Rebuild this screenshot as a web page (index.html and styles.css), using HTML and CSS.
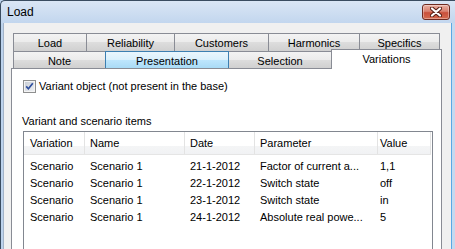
FILE: index.html
```html
<!DOCTYPE html>
<html>
<head>
<meta charset="utf-8">
<link rel="stylesheet" href="styles.css">
</head>
<body>
<div class="window">
  <div class="titlebar">
    <span class="title">Load</span>
    <div class="close">
      <svg width="12" height="10" viewBox="0 0 12 10">
        <path d="M2 1.5 L10 8.5 M10 1.5 L2 8.5" stroke="#5a2219" stroke-width="4.2" stroke-linecap="round"/>
        <path d="M2 1.5 L10 8.5 M10 1.5 L2 8.5" stroke="#ffffff" stroke-width="2.2" stroke-linecap="round"/>
      </svg>
    </div>
  </div>
  <div class="frame">
    <div class="client">
      <div class="tabctl">
        <div class="tabs">
          <div class="tabrow row1">
            <div class="tab w-load">Load</div>
            <div class="tab w-rel">Reliability</div>
            <div class="tab w-cust">Customers</div>
            <div class="tab w-harm">Harmonics</div>
            <div class="tab w-spec">Specifics</div>
          </div>
          <div class="tabrow row2">
            <div class="tab w-note">Note</div>
            <div class="tab hover w-pres">Presentation</div>
            <div class="tab w-sel">Selection</div>
            <div class="tab selected w-var">Variations</div>
          </div>
        </div>
        <div class="panel">
          <div class="check">
            <span class="box">
              <svg width="13" height="13" viewBox="0 0 13 13">
                <defs>
                  <linearGradient id="cbg" x1="0" y1="0" x2="1" y2="1">
                    <stop offset="0" stop-color="#c9ced6"/>
                    <stop offset="1" stop-color="#eef0f3"/>
                  </linearGradient>
                </defs>
                <rect x="0.5" y="0.5" width="12" height="12" fill="#f4f4f4" stroke="#8e8f8f"/>
                <rect x="2" y="2" width="9" height="9" fill="url(#cbg)"/>
                <path d="M3.2 6.4 L5.4 8.8 L9.8 3.3" fill="none" stroke="#2f4f9e" stroke-width="1.7"/>
              </svg>
            </span>
            <span class="check-text">Variant object (not present in the base)</span>
          </div>
          <div class="group-label">Variant and scenario items</div>
          <div class="listview">
            <div class="lv-row lv-head">
              <div class="c1">Variation</div>
              <div class="c2">Name</div>
              <div class="c3">Date</div>
              <div class="c4">Parameter</div>
              <div class="c5">Value</div>
            </div>
            <div class="lv-body">
              <div class="lv-row">
                <div class="c1">Scenario</div><div class="c2">Scenario 1</div><div class="c3">21-1-2012</div><div class="c4">Factor of current a...</div><div class="c5">1,1</div>
              </div>
              <div class="lv-row">
                <div class="c1">Scenario</div><div class="c2">Scenario 1</div><div class="c3">22-1-2012</div><div class="c4">Switch state</div><div class="c5">off</div>
              </div>
              <div class="lv-row">
                <div class="c1">Scenario</div><div class="c2">Scenario 1</div><div class="c3">23-1-2012</div><div class="c4">Switch state</div><div class="c5">in</div>
              </div>
              <div class="lv-row">
                <div class="c1">Scenario</div><div class="c2">Scenario 1</div><div class="c3">24-1-2012</div><div class="c4">Absolute real powe...</div><div class="c5">5</div>
              </div>
            </div>
          </div>
        </div>
      </div>
    </div>
    <div class="rframe"></div>
  </div>
</div>
</body>
</html>
```
FILE: styles.css
```css
* { box-sizing: border-box; }
html, body { margin: 0; padding: 0; }
body {
  width: 455px;
  height: 249px;
  overflow: hidden;
  background: #bcd2ec;
  font-family: "Liberation Sans", Arial, sans-serif;
  font-size: 11px;
  color: #000;
}
.window {
  width: 455px;
  height: 249px;
  display: flex;
  flex-direction: column;
  border-top: 1px solid #3a4c60;
  border-left: 1px solid #3a4c60;
  border-top-left-radius: 5px;
  background: linear-gradient(#dae6f5, #c2d6ee 22px, #bcd2ec 23px);
  overflow: hidden;
}
.titlebar {
  height: 22px;
  flex-shrink: 0;
  display: flex;
  align-items: flex-start;
}
.title {
  font-size: 12px;
  line-height: 22px;
  padding-left: 6px;
  color: #000;
}
.close {
  margin-left: auto;
  margin-right: 5px;
  margin-top: 3px;
  width: 28px;
  height: 16px;
  border: 1px solid #6e2a20;
  border-radius: 3px;
  background: linear-gradient(#eab0a2, #d98170 45%, #c9503b 55%, #d46a4f);
  display: flex;
  align-items: center;
  justify-content: center;
  box-shadow: inset 0 0 0 1px rgba(255,255,255,0.35);
}
.close svg { display: block; }
.frame {
  flex: 1;
  display: flex;
  padding-left: 2px;
  min-height: 0;
}
.client {
  width: 448px;
  border-left: 1px solid #a3b3c8;
  background: #f0f0f0;
  padding: 10px 0 0 7px;
  overflow: hidden;
}
.rframe {
  flex: 1;
  border-left: 1px solid #5aa8e4;
  background: #c5d9ef;
}
.tabctl {
  width: 431px;
  display: flex;
  flex-direction: column;
}
.tabs {
  padding-left: 2px;
}
.tabrow {
  display: flex;
  align-items: flex-start;
}
.row1 { height: 18px; }
.row2 { height: 17px; }
.tab {
  height: 100%;
  border: 1px solid #898c95;
  border-bottom: none;
  margin-left: -1px;
  background: linear-gradient(#f3f3f3, #ebebeb 50%, #dddddd 50%, #d0d0d0);
  display: flex;
  align-items: center;
  justify-content: center;
  white-space: nowrap;
  padding-top: 1px;
}
.tabrow .tab:first-child { margin-left: 0; }
.w-load { width: 74px; }
.w-rel { width: 89px; }
.w-cust { width: 95px; }
.w-harm { width: 92px; }
.w-spec { width: 81px; }
.w-note { width: 93px; }
.w-pres { width: 124px; }
.w-sel { width: 104px; }
.w-var { width: 111px; }
.tab.hover {
  position: relative;
  z-index: 1;
  border-color: #3c7fb1;
  background: linear-gradient(#eaf6fd, #d9f0fc 50%, #bee6fd 50%, #a9dbf6);
}
.tab.selected {
  position: relative;
  z-index: 2;
  height: 20px;
  margin-top: -2px;
  background: #fff;
  padding-top: 0;
  padding-bottom: 1px;
}
.panel {
  border: 1px solid #898c95;
  background: #fff;
  height: 200px;
  padding: 11px 0 0 11px;
}
.check {
  display: flex;
  align-items: center;
  height: 13px;
}
.box { width: 13px; height: 13px; display: block; }
.box svg { display: block; }
.check-text {
  margin-left: 3px;
  line-height: 13px;
}
.group-label {
  margin-top: 22px;
  margin-left: -1px;
  line-height: 13px;
}
.listview {
  margin-top: 3px;
  width: 410px;
  height: 130px;
  border: 1px solid #828790;
  background: #fff;
}
.lv-row {
  display: grid;
  grid-template-columns: 61px 100px 70px 123px 53px;
  height: 17px;
  align-items: center;
  white-space: nowrap;
}
.lv-head {
  height: 23px;
  align-items: stretch;
  border-bottom: 1px solid #e5e5e5;
  background: linear-gradient(#ffffff, #ffffff 62%, #f4f5f6 63%, #f1f2f4);
  width: 407px;
}
.lv-head > div {
  border-right: 1px solid #e3e3e3;
  display: flex;
  align-items: center;
}
.lv-body { padding-top: 2px; }
.c1 { padding-left: 6px; }
.c2 { padding-left: 5px; }
.c3 { padding-left: 5px; }
.c4 { padding-left: 5px; }
.c5 { padding-left: 2px; }
```
